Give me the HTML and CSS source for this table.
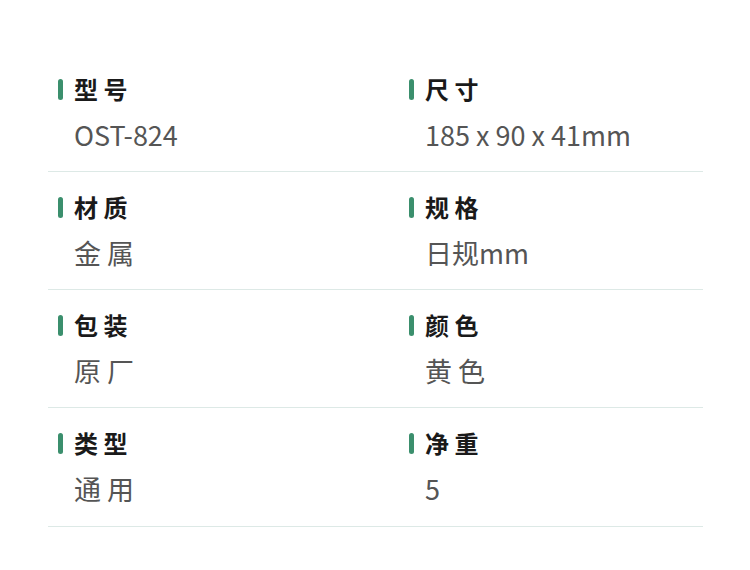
FILE: index.html
```
<!DOCTYPE html>
<html lang="zh-CN">
<head>
<meta charset="utf-8">
<link rel="stylesheet" href="styles.css">
</head>
<body>
<div class="specs">
  <div class="row">
    <div class="cell"><div class="label">型 号</div><div class="value">OST-824</div></div>
    <div class="cell"><div class="label">尺 寸</div><div class="value">185 x 90 x 41mm</div></div>
  </div>
  <div class="row">
    <div class="cell"><div class="label">材 质</div><div class="value">金 属</div></div>
    <div class="cell"><div class="label">规 格</div><div class="value">日规mm</div></div>
  </div>
  <div class="row">
    <div class="cell"><div class="label">包 装</div><div class="value">原 厂</div></div>
    <div class="cell"><div class="label">颜 色</div><div class="value">黄 色</div></div>
  </div>
  <div class="row">
    <div class="cell"><div class="label">类 型</div><div class="value">通 用</div></div>
    <div class="cell"><div class="label">净 重</div><div class="value">5</div></div>
  </div>
</div>
</body>
</html>
```
FILE: styles.css
```
html, body {
  margin: 0;
  padding: 0;
  background: #ffffff;
}
body {
  font-family: "Noto Sans CJK SC", "Noto Sans", sans-serif;
}
.specs {
  margin: 54px 47px 0 48px;
}
.row {
  display: grid;
  grid-template-columns: 351px 1fr;
  height: 117px;
  border-bottom: 1px solid #dde9e6;
}
.row:last-child {
  height: 118px;
}
.cell {
  padding: 20px 0 0 10px;
}
.label {
  display: flex;
  align-items: center;
  gap: 11px;
  font-size: 24px;
  font-weight: 700;
  color: #1a1a1a;
  line-height: 30px;
}
.label::before {
  content: "";
  width: 5px;
  height: 21px;
  border-radius: 3px;
  background: #3b8f6d;
}
.value {
  margin-top: 16px;
  padding-left: 16px;
  font-size: 27px;
  color: #555555;
  line-height: 30px;
}
```
